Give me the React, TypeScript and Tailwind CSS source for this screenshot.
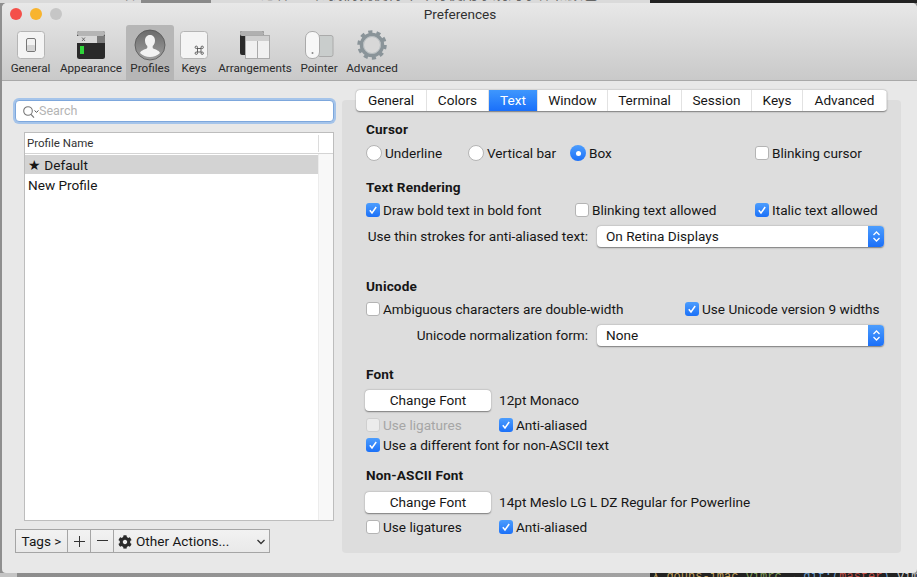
import { FaCog } from 'react-icons/fa';

const tabs = [
    { label: 'General', w: 'w-[71px]' },
    { label: 'Colors', w: 'w-[62px]' },
    { label: 'Text', w: 'w-[49px]', active: true },
    { label: 'Window', w: 'w-[70px]' },
    { label: 'Terminal', w: 'w-[74px]' },
    { label: 'Session', w: 'w-[70px]' },
    { label: 'Keys', w: 'w-[51px]' },
    { label: 'Advanced', w: 'flex-1' },
];

function GeneralIcon() {
    return (
        <svg width="30" height="30" viewBox="0 0 30 30">
            <rect x="1.5" y="1.5" width="27" height="27" rx="3" fill="#f4f4f4" stroke="#b5b5b5" />
            <rect x="10.5" y="8.5" width="9" height="13" rx="1.5" fill="#f2f2f2" stroke="#777" />
            <rect x="11" y="15" width="8" height="6" rx="1" fill="#d4d4d4" />
        </svg>
    );
}

function AppearanceIcon() {
    return (
        <svg width="30" height="30" viewBox="0 0 30 30">
            <rect x="1" y="1" width="28" height="28" rx="2.5" fill="#2a2a2a" />
            <rect x="1" y="1" width="28" height="5" rx="2" fill="#b5b5b5" />
            <rect x="1" y="6" width="28" height="7" fill="#d8d8d8" />
            <rect x="21" y="6" width="8" height="7" fill="#7c7c7c" />
            <path d="M6 7.5l3 3.5M9 7.5l-3 3.5" stroke="#555" strokeWidth="0.8" />
            <rect x="4" y="16" width="4" height="8" fill="#2fd43a" />
        </svg>
    );
}

function ProfilesIcon() {
    return (
        <svg width="32" height="32" viewBox="0 0 32 32">
            <defs>
                <linearGradient id="profile-bg" x1="0" y1="0" x2="0" y2="1">
                    <stop offset="0" stopColor="#6a6a6a" />
                    <stop offset="1" stopColor="#a0a0a0" />
                </linearGradient>
            </defs>
            <circle cx="16" cy="16" r="15" fill="url(#profile-bg)" stroke="#555" strokeWidth="0.8" />
            <path
                d="M16 6c-3.300 0-5 2.600-5 5.600 0 2.300.9 4.300 2.300 5.500v2c-1 1.300-6.300 2-7.300 4.900a14.500 14.500 0 0 0 20 0c-1-2.900-6.300-3.600-7.300-4.900v-2c1.400-1.200 2.300-3.200 2.300-5.500 0-3-1.700-5.600-5-5.600z"
                fill="#f2f2f2"
            />
        </svg>
    );
}

function KeysIcon() {
    return (
        <svg width="30" height="30" viewBox="0 0 30 30">
            <rect x="1.500" y="1.500" width="27" height="27" rx="3" fill="#f4f4f4" stroke="#b5b5b5" />
            <g fill="none" stroke="#555" strokeWidth="0.9">
                <rect x="18.500" y="18.500" width="3.500" height="3.500" />
                <circle cx="17.300" cy="17.300" r="1.200" />
                <circle cx="23.200" cy="17.300" r="1.200" />
                <circle cx="17.300" cy="23.200" r="1.200" />
                <circle cx="23.200" cy="23.200" r="1.200" />
            </g>
        </svg>
    );
}

function ArrangementsIcon() {
    return (
        <svg width="32" height="30" viewBox="0 0 32 30">
            <rect x="1" y="1" width="24" height="24" rx="2" fill="#2a2a2a" />
            <rect x="1" y="1" width="24" height="5" rx="2" fill="#b0b0b0" />
            <rect x="6.500" y="5.500" width="24" height="23" fill="#f0f0f0" stroke="#aaa" />
            <rect x="7" y="6" width="23" height="5" fill="#cfcfcf" />
            <path d="M18.500 11v17" stroke="#aaa" />
        </svg>
    );
}

function PointerIcon() {
    return (
        <svg width="30" height="30" viewBox="0 0 30 30">
            <rect x="14" y="5.500" width="15" height="21" rx="2" fill="#c9cdcc" stroke="#aaa" />
            <rect x="1.500" y="1.500" width="14" height="27" rx="6.500" fill="#f7f7f7" stroke="#aaa" />
            <circle cx="8.500" cy="23" r="1" fill="#888" />
        </svg>
    );
}

function AdvancedIcon() {
    return (
        <svg width="30" height="30" viewBox="0 0 30 30">
            <circle cx="15" cy="15" r="13" fill="none" stroke="#8a9499" strokeWidth="3.500" strokeDasharray="4.080 4.090" />
            <circle cx="15" cy="15" r="10.500" fill="none" stroke="#8a9499" strokeWidth="3.500" />
            <circle cx="15" cy="15" r="8.500" fill="#d8d8d8" stroke="#b4babd" />
        </svg>
    );
}

const toolbar = [
    { label: 'General', w: 'w-[41px]', ml: 'ml-[8px]', icon: <GeneralIcon /> },
    { label: 'Appearance', w: 'w-[66px]', ml: 'ml-[7px]', icon: <AppearanceIcon /> },
    { label: 'Profiles', w: 'w-[48px]', ml: 'ml-[2px]', icon: <ProfilesIcon />, active: true },
    { label: 'Keys', w: 'w-[36px]', ml: 'ml-[2px]', icon: <KeysIcon /> },
    { label: 'Arrangements', w: 'w-[76px]', ml: 'ml-[5px]', icon: <ArrangementsIcon /> },
    { label: 'Pointer', w: 'w-[40px]', ml: 'ml-[6px]', icon: <PointerIcon /> },
    { label: 'Advanced', w: 'w-[54px]', ml: 'ml-[6px]', icon: <AdvancedIcon /> },
];

function Check({ checked, disabled, label, className }: { checked?: boolean; disabled?: boolean; label: string; className?: string }) {
    return (
        <div className={`flex items-center gap-[3px] ${className ?? ''}`}>
            {checked ? (
                <span className="flex h-[14px] w-[14px] items-center justify-center rounded-[3px] bg-gradient-to-b from-[#4c9dfd] to-[#1b70f8]">
                    <svg width="10" height="10" viewBox="0 0 10 10">
                        <path d="M1.800 5.200l2.200 2.800 4.200-6" fill="none" stroke="#fff" strokeWidth="1.500" />
                    </svg>
                </span>
            ) : (
                <span className={`h-[14px] w-[14px] rounded-[3px] border ${disabled ? 'border-[#cfcfcf] bg-[#ececec]' : 'border-[#b4b4b4] bg-white'}`} />
            )}
            <span className={disabled ? 'text-[#a6a6a6]' : ''}>{label}</span>
        </div>
    );
}

function Radio({ checked, label, className }: { checked?: boolean; label: string; className?: string }) {
    return (
        <div className={`flex items-center gap-[3px] ${className ?? ''}`}>
            {checked ? (
                <span className="flex h-[16px] w-[16px] items-center justify-center rounded-full bg-gradient-to-b from-[#4c9dfd] to-[#1b70f8]">
                    <span className="h-[5px] w-[5px] rounded-full bg-white" />
                </span>
            ) : (
                <span className="h-[16px] w-[16px] rounded-full border border-[#b4b4b4] bg-white" />
            )}
            <span>{label}</span>
        </div>
    );
}

function Select({ value }: { value: string }) {
    return (
        <div className="flex h-[21px] w-[287px] items-center overflow-hidden rounded-[4px] bg-white shadow-[0_0.5px_1.5px_rgba(0,0,0,0.45)]">
            <span className="flex-1 pl-[9px]">{value}</span>
            <span className="flex h-full w-[16px] items-center justify-center bg-gradient-to-b from-[#4c9dfd] to-[#1b6ff8]">
                <svg width="9" height="13" viewBox="0 0 9 13">
                    <path d="M1.500 5l3-3 3 3M1.500 8l3 3 3-3" fill="none" stroke="#fff" strokeWidth="1.300" />
                </svg>
            </span>
        </div>
    );
}

function FontButton() {
    return (
        <div className="-ml-[1px] flex h-[21px] w-[126px] items-center justify-center rounded-[4px] bg-white shadow-[0_0.5px_1.5px_rgba(0,0,0,0.45)]">
            Change Font
        </div>
    );
}

export default function App() {
    return (
        <div className="flex h-[577px] w-[917px] flex-col overflow-hidden bg-[#8f8f8f] font-[Roboto,sans-serif] text-[13.600px] text-[#161616]">
            {/* Desktop behind the window, top edge */}
            <div className="flex h-[3px] overflow-hidden">
                <div className="flex h-full w-[650px] shrink-0 items-end overflow-hidden bg-[#dadada] pl-[125px]">
                    <span className="whitespace-nowrap font-['Noto_Sans_CJK_SC',sans-serif] text-[15px] leading-[20px] text-[#666]">如</span>
                    <span className="ml-[1px] h-full w-[70px] shrink-0 bg-[#8a8a8a]" />
                    <span className="whitespace-nowrap pl-[50px] font-['Noto_Sans_CJK_SC',sans-serif] text-[15px] leading-[20px] text-[#666]">
                        这样 一来 我们就使得命令行使用系统的字体和颜色
                    </span>
                </div>
                <div className="h-full flex-1 bg-[#222]" />
            </div>

            <div className="ml-[2px] flex h-[570px] w-[915px] flex-col overflow-hidden rounded-t-[5px] rounded-b-[4px] bg-[#e8e8e8]">
                {/* Title + toolbar */}
                <div className="h-[78px] shrink-0 border-b border-[#a9a9a9] bg-gradient-to-b from-[#e8e8e8] to-[#c9c9c9]">
                    <div className="flex h-[22px] items-center pl-[8px]">
                        <div className="flex gap-[8px]">
                            <span className="h-[12px] w-[12px] rounded-full bg-[#f4504a]" />
                            <span className="h-[12px] w-[12px] rounded-full bg-[#f8b42e]" />
                            <span className="h-[12px] w-[12px] rounded-full bg-[#c6c6c6]" />
                        </div>
                        <span className="flex-1 pr-[59px] pt-[1px] text-center text-[#303030]">Preferences</span>
                    </div>
                    <div className="flex h-[55px]">
                        {toolbar.map(item => (
                            <div
                                key={item.label}
                                className={`flex flex-col items-center justify-between pt-[4px] text-[11.700px] ${item.w} ${item.ml} ${item.active ? 'rounded-t-[3px] bg-[#b6b6b6]' : ''}`}
                            >
                                <div className="flex h-[32px] items-center justify-center">{item.icon}</div>
                                <span className="whitespace-nowrap pb-[5px] leading-[14px] text-[#2a2a2a]">{item.label}</span>
                            </div>
                        ))}
                    </div>
                </div>

                {/* Body */}
                <div className="flex flex-1 pl-[13px] pr-[16px]">
                    {/* Left column */}
                    <div className="flex w-[319px] flex-col pt-[19px]">
                        <div className="flex h-[22px] items-center rounded-[4px] border border-[#7da7dc] bg-white pl-[6px] pt-[1px] text-[12.500px] text-[#b4b4b4] shadow-[0_0_0_2px_rgba(110,165,235,0.55)]">
                            <svg width="17" height="14" viewBox="0 0 17 14">
                                <circle cx="6" cy="6" r="4.300" fill="none" stroke="#777" strokeWidth="1.100" />
                                <path d="M9 9.300l3 3.300" stroke="#777" strokeWidth="1.200" />
                                <path d="M12.500 5.500l2 1.800 2-1.800" fill="none" stroke="#555" strokeWidth="1" />
                            </svg>
                            <span>Search</span>
                        </div>

                        <div className="ml-[9px] mt-[10px] flex h-[389px] flex-col border border-[#bdbdbd] bg-white">
                            <div className="flex h-[21px] shrink-0 items-center border-b border-[#d4d4d4] pt-[1px]">
                                <span className="w-[293px] pl-[2px] text-[11.500px] text-[#333]">Profile Name</span>
                                <span className="h-[17px] border-l border-[#dcdcdc]" />
                            </div>
                            <div className="flex flex-1">
                                <div className="w-[293px] pt-[1px]">
                                    <div className="flex h-[19px] items-center bg-[#d3d3d3] pl-[3px] pt-[1px]">★ Default</div>
                                    <div className="flex h-[22px] items-center pl-[3px] pt-[1px]">New Profile</div>
                                </div>
                                <div className="flex-1 border-l border-[#ececec] bg-[#f8f8f8]" />
                            </div>
                        </div>

                        <div className="mt-[8px] flex h-[24px] w-[255px] border border-[#a5a5a5] bg-gradient-to-b from-[#f2f2f2] to-[#e9e9e9]">
                            <span className="flex w-[52px] items-center justify-center border-r border-[#a5a5a5] pt-[1px]">Tags &gt;</span>
                            <span className="flex w-[23px] items-center justify-center border-r border-[#a5a5a5]">
                                <svg width="13" height="13" viewBox="0 0 13 13">
                                    <path d="M6.500 1v11M1 6.500h11" stroke="#333" strokeWidth="1" />
                                </svg>
                            </span>
                            <span className="flex w-[23px] items-center justify-center border-r border-[#a5a5a5]">
                                <svg width="13" height="13" viewBox="0 0 13 13">
                                    <path d="M1 5.500h11" stroke="#333" strokeWidth="1" />
                                </svg>
                            </span>
                            <span className="flex flex-1 items-center gap-[4px] pl-[4px] pr-[3px] pt-[1px]">
                                <FaCog size={14} color="#2b2b2b" />
                                <span className="flex-1">Other Actions...</span>
                                <svg width="10" height="8" viewBox="0 0 10 8">
                                    <path d="M1.500 2l3.500 3.500L8.500 2" fill="none" stroke="#333" strokeWidth="1.300" />
                                </svg>
                            </span>
                        </div>
                    </div>

                    {/* Right column */}
                    <div className="ml-[8px] mt-[19px] flex h-[453px] flex-1 flex-col rounded-[4px] bg-[#dddddd] pl-[24px] pr-[17px]">
                        <div className="-ml-[10px] -mr-[3px] -mt-[10px] flex h-[21px] shrink-0 overflow-hidden rounded-[4px] bg-white shadow-[0_0.5px_1.5px_rgba(0,0,0,0.45)]">
                            {tabs.map(tab => (
                                <div
                                    key={tab.label}
                                    className={`flex items-center justify-center border-r border-[#e2e2e2] ${tab.w} ${tab.active ? 'bg-gradient-to-b from-[#3f97fd] to-[#1a6ffa] text-white' : ''}`}
                                >
                                    {tab.label}
                                </div>
                            ))}
                        </div>

                        <div className="mt-[10px] font-bold leading-[16px] tracking-[0.15px]">Cursor</div>
                        <div className="mt-[8px] flex h-[16px] items-center">
                            <Radio label="Underline" className="w-[102px]" />
                            <Radio label="Vertical bar" className="w-[102px]" />
                            <Radio checked label="Box" className="w-[185px]" />
                            <Check label="Blinking cursor" />
                        </div>

                        <div className="mt-[18px] font-bold leading-[16px] tracking-[0.15px]">Text Rendering</div>
                        <div className="mt-[7px] flex h-[16px] items-center">
                            <Check checked label="Draw bold text in bold font" className="w-[209px]" />
                            <Check label="Blinking text allowed" className="w-[180px]" />
                            <Check checked label="Italic text allowed" />
                        </div>
                        <div className="mt-[8px] flex h-[21px] items-center gap-[9px]">
                            <span className="w-[222px] whitespace-nowrap text-right">Use thin strokes for anti-aliased text:</span>
                            <Select value="On Retina Displays" />
                        </div>

                        <div className="mt-[31px] font-bold leading-[16px] tracking-[0.15px]">Unicode</div>
                        <div className="mt-[7px] flex h-[16px] items-center">
                            <Check label="Ambiguous characters are double-width" className="w-[319px]" />
                            <Check checked label="Use Unicode version 9 widths" />
                        </div>
                        <div className="mt-[8px] flex h-[21px] items-center gap-[9px]">
                            <span className="w-[222px] text-right">Unicode normalization form:</span>
                            <Select value="None" />
                        </div>

                        <div className="mt-[20px] font-bold leading-[16px] tracking-[0.15px]">Font</div>
                        <div className="mt-[8px] flex h-[21px] items-center gap-[8px]">
                            <FontButton />
                            <span>12pt Monaco</span>
                        </div>
                        <div className="mt-[6px] flex h-[16px] items-center">
                            <Check disabled label="Use ligatures" className="w-[133px]" />
                            <Check checked label="Anti-aliased" />
                        </div>
                        <div className="mt-[4px] flex h-[16px] items-center">
                            <Check checked label="Use a different font for non-ASCII text" />
                        </div>

                        <div className="mt-[14px] font-bold leading-[16px] tracking-[0.15px]">Non-ASCII Font</div>
                        <div className="mt-[9px] flex h-[21px] items-center gap-[8px]">
                            <FontButton />
                            <span>14pt Meslo LG L DZ Regular for Powerline</span>
                        </div>
                        <div className="mt-[6px] flex h-[16px] items-center">
                            <Check label="Use ligatures" className="w-[133px]" />
                            <Check checked label="Anti-aliased" />
                        </div>
                    </div>
                </div>
            </div>

            {/* Desktop behind the window, bottom edge */}
            <div className="flex h-[4px] overflow-hidden">
                <div className="h-full w-[17px] shrink-0 bg-[#c4c4c4]" />
                <div className="h-full w-[633px] shrink-0 bg-gradient-to-r from-[#8c8c8c] to-[#a2a2a2]" />
                <div className="h-full flex-1 overflow-hidden whitespace-nowrap bg-[#222] pl-[2px] font-['Liberation_Mono',monospace] text-[12px] leading-[9px]">
                    <span className="text-[#c0a060]">λ gouns-imac </span>
                    <span className="text-[#7f9a5a]">vimrc </span>
                    <span className="text-[#c0a060]">→ </span>
                    <span className="text-[#6a9fd0]">git:(</span>
                    <span className="text-[#c0504a]">master</span>
                    <span className="text-[#6a9fd0]">) </span>
                    <span className="text-[#c8c8c8]">vim</span>
                </div>
            </div>
        </div>
    );
}
